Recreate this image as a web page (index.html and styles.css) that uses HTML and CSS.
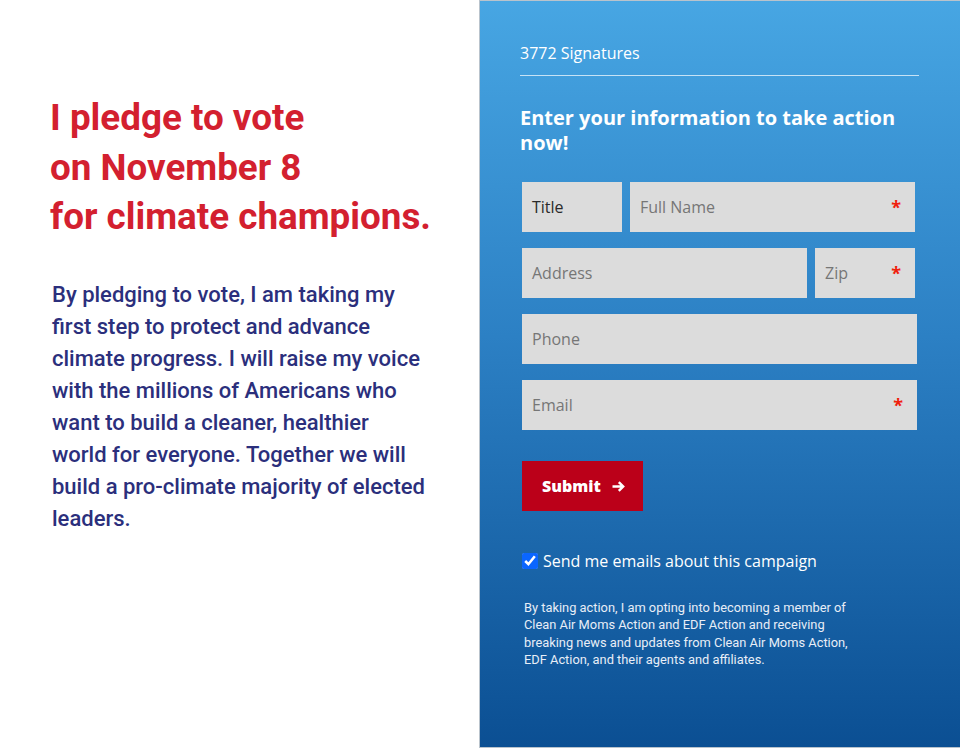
FILE: index.html
```html
<!DOCTYPE html>
<html lang="en">
<head>
<meta charset="utf-8">
<title>Pledge to vote</title>
<link rel="stylesheet" href="styles.css">
</head>
<body>
<div class="page">
  <section class="intro">
    <h1 class="headline">I pledge to vote<br>on November 8<br>for climate champions.</h1>
    <p class="lead">By pledging to vote, I am taking my first step to protect and advance climate progress. I will raise my voice with the millions of Americans who want to build a cleaner, healthier world for everyone. Together we will build a pro-climate majority of elected leaders.</p>
  </section>
  <section class="panel">
    <div class="count">3772 Signatures</div>
    <h2 class="form-title">Enter your information to take action now!</h2>
    <form class="form">
      <div class="row">
        <div class="field field-title"><span class="val">Title</span></div>
        <div class="field grow"><span class="ph">Full Name</span><span class="req">*</span></div>
      </div>
      <div class="row">
        <div class="field grow"><span class="ph">Address</span></div>
        <div class="field field-zip"><span class="ph">Zip</span><span class="req">*</span></div>
      </div>
      <div class="row wide">
        <div class="field grow"><span class="ph">Phone</span></div>
      </div>
      <div class="row wide">
        <div class="field grow"><span class="ph">Email</span><span class="req">*</span></div>
      </div>
      <button type="button" class="submit">Submit<svg class="arrow" width="13" height="11" viewBox="0 0 13 11" aria-hidden="true"><path d="M0.5 5.5H11M6.8 1.2L11.2 5.5L6.8 9.8" fill="none" stroke="#fff" stroke-width="2.4" stroke-linejoin="miter"/></svg></button>
      <label class="optin"><input type="checkbox" checked> Send me emails about this campaign</label>
      <p class="legal">By taking action, I am opting into becoming a member of Clean Air Moms Action and EDF Action and receiving breaking news and updates from Clean Air Moms Action, EDF Action, and their agents and affiliates.</p>
    </form>
  </section>
</div>
</body>
</html>
```
FILE: styles.css
```css
* { box-sizing: border-box; }
html, body { margin: 0; padding: 0; background: #fff; }
.page {
  display: flex;
  width: 960px;
  height: 748px;
}
.intro {
  width: 479px;
  padding: 93px 0 0 50px;
  font-family: Roboto, "Liberation Sans", sans-serif;
}
.headline {
  margin: 0;
  color: #d3202f;
  font-size: 36.8px;
  font-weight: 700;
  line-height: 49.5px;
}
.lead {
  margin: 37px 0 0 2px;
  width: 374px;
  color: #2b2f7c;
  font-size: 22px;
  font-weight: 500;
  line-height: 32px;
}
.panel {
  width: 481px;
  border: 1px solid #b9c3cc;
  border-right: 0;
  background: linear-gradient(180deg, #47a6e3 0%, #2c80c4 45%, #0b4f93 100%);
  padding: 0 41px 0 40px;
  font-family: "Open Sans", "Liberation Sans", sans-serif;
  color: #fff;
}
.count {
  padding: 41px 0 11px;
  font-size: 16px;
  line-height: 22px;
  border-bottom: 1px solid rgba(255,255,255,0.7);
}
.form-title {
  margin: 29px 0 0;
  font-size: 20px;
  font-weight: 700;
  line-height: 25px;
}
.form {
  margin-top: 27px;
  padding-left: 2px;
}
.row {
  display: flex;
  gap: 8px;
  width: 393px;
  margin-bottom: 16px;
}
.row.wide { width: 395px; }
.field {
  height: 50px;
  background: #dcdcdc;
  display: flex;
  align-items: center;
  justify-content: space-between;
  padding: 0 14px 0 10px;
  font-size: 16px;
}
.field-title { width: 100px; }
.field-zip { width: 100px; }
.grow { flex: 1; }
.val { color: #2a2a2a; }
.ph { color: #767676; }
.req { color: #f0200c; font-weight: 700; font-size: 18px; }
.submit {
  display: flex;
  align-items: center;
  justify-content: center;
  gap: 11px;
  margin-top: 31px;
  width: 121px;
  height: 50px;
  border: 0;
  background: #bb0019;
  color: #fff;
  font-family: "Open Sans", "Liberation Sans", sans-serif;
  font-size: 16px;
  font-weight: 800;
  padding: 0 0 0 2px;
}
.arrow { display: block; }
.optin {
  display: flex;
  align-items: center;
  margin-top: 39px;
  font-size: 16px;
  line-height: 22px;
}
.optin input {
  margin: 0 5px 0 0;
  width: 16px;
  height: 16px;
  accent-color: #0a66ff;
}
.legal {
  margin: 27px 0 0 2px;
  width: 330px;
  font-family: Roboto, "Liberation Sans", sans-serif;
  font-size: 12.85px;
  line-height: 17.4px;
  color: #e8eef7;
}
```
